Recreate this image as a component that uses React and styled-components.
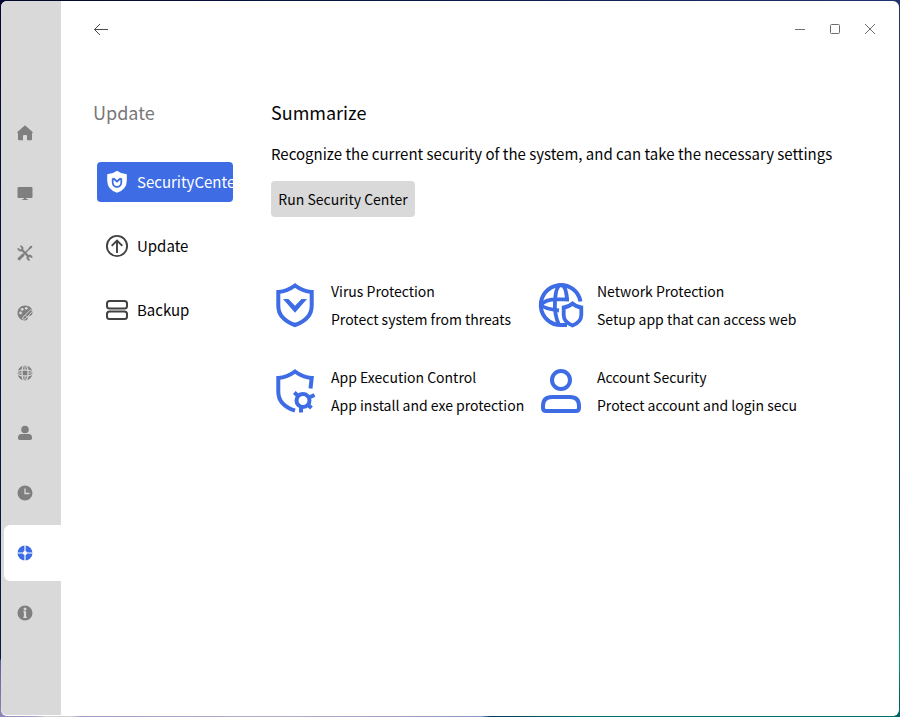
import React from "react";
import styled, { createGlobalStyle, css } from "styled-components";

const BLUE = "#3d6ce5";
const GREY = "#7f7f7f";

const GlobalStyle = createGlobalStyle`
  * { box-sizing: border-box; }
  body {
    margin: 0;
    overflow: hidden;
    font-family: "Noto Sans CJK SC", "Noto Sans", sans-serif;
    color: #050505;
  }
  button { font: inherit; color: inherit; border: 0; padding: 0; background: none; }
  h1, h2, p { margin: 0; font-weight: 400; }
  svg { display: block; flex: none; }
`;

const Desktop = styled.div`
  width: 900px;
  height: 717px;
  padding: 1px;
  background:
    linear-gradient(90deg, #8f88b8 0, #a5a0c6 4%, #d0cfd4 5%, #d0cfd4 8%, #9f9ac4 9%, #b5aeca 30%, #8f94c0 53.5%, #023a55 54.5%, #00706f 65%, #00706f 100%) bottom / 100% 1px no-repeat,
    linear-gradient(90deg, #03082a, #0a1a4a 50%, #20336d) top / 100% 6px no-repeat,
    linear-gradient(180deg, #03082a, #0a1444 50%, #021c45 91.8%, #5f5d9b 92.2%, #8f88b8) left / 6px 100% no-repeat,
    linear-gradient(180deg, #20336d, #18366a 40%, #07465f 70%, #0a9482 92%, #006068 97%) right / 6px 100% no-repeat;
`;

const Window = styled.div`
  display: flex;
  height: 715px;
  border-radius: 6px;
  overflow: hidden;
  background: #fff;
`;

const Rail = styled.nav`
  display: flex;
  flex-direction: column;
  gap: 4px;
  width: 60px;
  height: 714px;
  padding: 104px 0 0 3px;
  background: #d9d9d9;
  border-bottom-left-radius: 6px;
`;

const RailButton = styled.button`
  display: flex;
  align-items: center;
  height: 56px;
  padding-left: 13px;
  border-radius: 6px 0 0 6px;
  color: ${GREY};
  ${(p) => p.$active && css`
    background: #fff;
    color: ${BLUE};
  `}
`;

const Content = styled.div`
  display: flex;
  flex-direction: column;
  flex: 1;
`;

const TitleBar = styled.header`
  display: flex;
  align-items: center;
  justify-content: space-between;
  height: 56px;
  padding: 0 21px 0 32px;
`;

const WindowControls = styled.div`
  display: flex;
  gap: 19px;
`;

const Columns = styled.div`
  display: flex;
  padding-top: 40px;
`;

const Menu = styled.aside`
  display: flex;
  flex-direction: column;
  width: 210px;
  padding-left: 32px;
`;

const MenuTitle = styled.h2`
  margin-bottom: 34px;
  font-size: 18px;
  line-height: 31px;
  color: #777;
`;

const MenuItem = styled.button`
  display: flex;
  align-items: center;
  gap: 8px;
  width: 136px;
  height: 40px;
  margin: 0 0 24px 4px;
  padding-left: 8px;
  border-radius: 4px;
  overflow: hidden;
  font-size: 15px;
  line-height: 24px;
  white-space: nowrap;
  ${(p) => p.$active && css`
    background: ${BLUE};
    color: #fff;
  `}
`;

const Main = styled.main`
  display: flex;
  flex-direction: column;
  align-items: flex-start;
`;

const Title = styled.h1`
  font-size: 18px;
  line-height: 31px;
`;

const Description = styled.p`
  margin: 14px 0 15px;
  font-size: 15px;
  line-height: 24px;
  white-space: nowrap;
`;

const RunButton = styled.button`
  width: 144px;
  height: 36px;
  border-radius: 4px;
  background: #d9d9d9;
  font-size: 14px;
  line-height: 24px;
  white-space: nowrap;
`;

const Cards = styled.div`
  display: grid;
  grid-template-columns: 266px 266px;
  row-gap: 30px;
  margin-top: 60px;
`;

const Card = styled.section`
  display: flex;
  align-items: center;
  gap: 12px;
  height: 56px;
`;

const CardText = styled.p`
  font-size: 14px;
  line-height: 28px;
  white-space: nowrap;
`;

const RailIcon = ({ children }) => (
  <svg width="16" height="16" viewBox="0 0 16 16" fill="currentColor">{children}</svg>
);

const HomeIcon = () => (
  <RailIcon><path d="M8 .3 15.600 7v1.200H15v6.100c0 .6-.3.900-.9.900H10v-4c0-.8-.6-1.200-1.200-1.200H7.200C6.600 10 6 10.400 6 11.200v4H1.900c-.6 0-.9-.3-.9-.9V8.200H.400V7Z" /></RailIcon>
);
const DisplayIcon = () => (
  <RailIcon><path d="M1.500 2h13q1 0 1 1v9q0 1-1 1H9v.7l2 .8v.5H5v-.5l2-.8V13H1.500q-1 0-1-1V3q0-1 1-1Z" /></RailIcon>
);
const ToolsIcon = () => (
  <RailIcon>
    <g fill="none" stroke="currentColor" strokeLinecap="round">
      <path strokeWidth="3" d="m2.200 13.800 3.600-3.600" />
      <path strokeWidth="1.500" d="m6 10 7-7" />
      <path strokeWidth="2.200" d="m13.200 2.800 1-1" />
      <path strokeWidth="2.200" d="m4.800 4.800 6.800 6.800" />
      <path strokeWidth="1.900" strokeLinecap="butt" d="M3.300 1.100c2.200.4 2.800 2.400 1.600 3.700S1.800 5.500 1.100 3.300M12.700 15c-2.200-.4-2.800-2.400-1.600-3.700s3.100-.7 3.800 1.500" />
    </g>
  </RailIcon>
);
const PaletteIcon = () => (
  <RailIcon>
    <path d="M8 .5c4.400 0 7.500 2.800 7.500 6.500 0 2.600-1 3.800-3 3.900-1.600.1-2 .9-1.800 2.200.2 1.500-.9 2.400-2.700 2.400C3.700 15.500.5 12.300.5 8S3.700.5 8 .5Z" />
    <g fill="#d9d9d9">
      <circle cx="3.600" cy="8" r="1.400" />
      <circle cx="5.200" cy="4.300" r="1.400" />
      <circle cx="9.300" cy="3.300" r="1.400" />
    </g>
    <path d="M5 13.500c1.800-.5.800-2.300 2.700-3L13.700 4.600l2 1.500-6 6.400C9 14.200 6.500 14.700 5 13.500Z" stroke="#d9d9d9" strokeWidth=".9" />
    <path d="m8.200 10.200 1.800 1.500" stroke="#d9d9d9" strokeWidth=".8" />
  </RailIcon>
);
const GlobeIcon = () => (
  <RailIcon>
    <circle cx="8" cy="8" r="7.500" />
    <g fill="none" stroke="#d9d9d9" strokeWidth="1.200">
      <rect x="5.100" y="5.100" width="5.800" height="5.800" />
      <path d="M8 0v5M8 11v5M0 8h5M11 8h5" strokeWidth=".9" />
      <path d="M5.100 5.100Q5.500 2.300 6.700.4M10.900 5.100Q10.500 2.300 9.300.4M5.100 10.900Q5.500 13.700 6.700 15.600M10.900 10.900Q10.500 13.700 9.300 15.600" />
      <path d="M5.100 5.100Q2.300 5.500.4 6.700M5.100 10.900Q2.300 10.500.4 9.300M10.900 5.100Q13.700 5.500 15.600 6.700M10.900 10.900Q13.700 10.500 15.600 9.300" />
    </g>
  </RailIcon>
);
const UserIcon = () => (
  <RailIcon><circle cx="8" cy="4.500" r="3.800" /><path d="M4.500 9h7Q15 9 15 12.500v.8q0 1.700-1.700 1.700H2.700Q1 15 1 13.300v-.8Q1 9 4.500 9Z" /></RailIcon>
);
const ClockIcon = () => (
  <RailIcon><circle cx="8" cy="8" r="7.500" /><path d="M8 3.500V8.500h4.500" fill="none" stroke="#d9d9d9" strokeWidth="1.300" /></RailIcon>
);
const UpdateIcon = () => (
  <RailIcon>
    <circle cx="8" cy="8" r="7.500" />
    <path d="M8 0v16M0 8h16" stroke="#fff" strokeWidth="1.200" />
    <circle cx="8" cy="8" r="2.100" fill="#fff" />
  </RailIcon>
);
const InfoIcon = () => (
  <RailIcon>
    <circle cx="8" cy="8" r="7.500" />
    <circle cx="8" cy="4" r="1.500" fill="#d9d9d9" />
    <path d="M6.300 6.700H8M6.300 12.400h3.600" fill="none" stroke="#d9d9d9" strokeWidth="1.100" />
    <path d="M8 6.200v6.500" stroke="#d9d9d9" strokeWidth="2.200" />
  </RailIcon>
);

const BackIcon = () => (
  <svg width="16" height="16" viewBox="0 0 16 16" fill="none" stroke="#4a4a4a" strokeWidth="1">
    <path d="M1.500 8.500H15M7 3 1.500 8.500 7 14" />
  </svg>
);
const Control = ({ children }) => (
  <svg width="16" height="16" viewBox="0 0 16 16" fill="none" stroke="#6c6c6c">{children}</svg>
);

const ShieldBadge = () => (
  <svg width="24" height="24" viewBox="0 0 24 24">
    <path d="M12 .800Q16.500 4.200 21.800 4.300V10.500Q21.800 19.500 12 22.800 2.200 19.500 2.200 10.500V4.300Q7.500 4.200 12 .800Z" fill="#fff" />
    <path d="m8.300 8.300 3.700 3.200 3.700-3.200M7.700 8.200v4.300a4.300 4.300 0 0 0 8.600 0V8.200" fill="none" stroke={BLUE} strokeWidth="1.800" />
  </svg>
);
const UploadIcon = () => (
  <svg width="24" height="24" viewBox="0 0 24 24" fill="none" stroke="#424242" strokeWidth="1.900">
    <circle cx="12" cy="12" r="10.100" />
    <path d="M12 19V6.500M6.700 11.800 12 6.500l5.300 5.300" />
  </svg>
);
const BackupIcon = () => (
  <svg width="24" height="24" viewBox="0 0 24 24" fill="none" stroke="#424242" strokeWidth="2">
    <rect x="2" y="3" width="20" height="7.500" rx="2.500" />
    <rect x="2" y="13.500" width="20" height="7.500" rx="2.500" />
  </svg>
);

const CardIcon = ({ children }) => (
  <svg width="48" height="48" viewBox="0 0 48 48" fill="none" stroke={BLUE} strokeWidth="4">{children}</svg>
);
const VirusIcon = () => (
  <CardIcon>
    <path d="M24 4.500Q32 10.500 40.700 11V25Q40.700 38 24 44 7.300 38 7.300 25V11Q16 10.500 24 4.500Z" />
    <path d="M12 18h5.500L24 24.700 30.500 18H36L24 31.800Z" fill={BLUE} stroke="none" />
  </CardIcon>
);
const NetworkIcon = () => (
  <CardIcon>
    <path d="M43.500 20.500A20 20 0 1 0 24 44H30" />
    <path d="M22 44Q17 33 18 20 19 4 24 4 28.500 4 30 17M4 24Q8 18.500 20 18.200L32 18.500M4 24Q8 28 22 29.500" strokeWidth="3.800" />
    <path d="M35.500 22.500Q39.500 26 44.300 26.500V34Q44.300 41 35.500 44.500 26.700 41 26.700 34V26.500Q31.500 26 35.500 22.500Z" strokeWidth="3.800" />
  </CardIcon>
);
const ExecutionIcon = () => (
  <CardIcon>
    <path d="M39.500 21.500 40.700 11Q32 10.500 24 4.500 16 10.500 7.300 11V25Q7.300 38 24 43.700" />
    <circle cx="32" cy="33.500" r="6.500" />
    <path d="m23.300 25.500 4 3.500M37 31l6.500-3M36.500 37.500l4 3.500M30 39v6.500" />
  </CardIcon>
);
const AccountIcon = () => (
  <CardIcon>
    <circle cx="24" cy="13" r="9" />
    <path d="M15 30H33Q42 30 42 39V41Q42 44 39 44H9Q6 44 6 41V39Q6 30 15 30Z" />
  </CardIcon>
);

const railItems = [
  ["Home", HomeIcon], ["Display", DisplayIcon], ["Tools", ToolsIcon],
  ["Personalize", PaletteIcon], ["Network", GlobeIcon], ["Account", UserIcon],
  ["Time", ClockIcon], ["Security", UpdateIcon], ["About", InfoIcon],
];
const menuItems = [
  ["SecurityCenter", ShieldBadge], ["Update", UploadIcon], ["Backup", BackupIcon],
];
const cards = [
  ["Virus Protection", "Protect system from threats", VirusIcon],
  ["Network Protection", "Setup app that can access web", NetworkIcon],
  ["App Execution Control", "App install and exe protection", ExecutionIcon],
  ["Account Security", "Protect account and login secu", AccountIcon],
];

export default function App() {
  return (
    <Desktop>
      <GlobalStyle />
      <Window>
        <Rail>
          {railItems.map(([name, Icon]) => (
            <RailButton key={name} $active={name === "Security"}><Icon /></RailButton>
          ))}
        </Rail>
        <Content>
          <TitleBar>
            <BackIcon />
            <WindowControls>
              <Control><path d="M3 8.500h10" /></Control>
              <Control><rect x="3.500" y="3.500" width="9" height="9" rx="1" /></Control>
              <Control><path d="m3 3 10 10M13 3 3 13" /></Control>
            </WindowControls>
          </TitleBar>
          <Columns>
            <Menu>
              <MenuTitle>Update</MenuTitle>
              {menuItems.map(([name, Icon]) => (
                <MenuItem key={name} $active={name === "SecurityCenter"}><Icon />{name}</MenuItem>
              ))}
            </Menu>
            <Main>
              <Title>Summarize</Title>
              <Description>Recognize the current security of the system, and can take the necessary settings</Description>
              <RunButton>Run Security Center</RunButton>
              <Cards>
                {cards.map(([name, detail, Icon]) => (
                  <Card key={name}>
                    <Icon />
                    <div>
                      <CardText>{name}</CardText>
                      <CardText>{detail}</CardText>
                    </div>
                  </Card>
                ))}
              </Cards>
            </Main>
          </Columns>
        </Content>
      </Window>
    </Desktop>
  );
}
